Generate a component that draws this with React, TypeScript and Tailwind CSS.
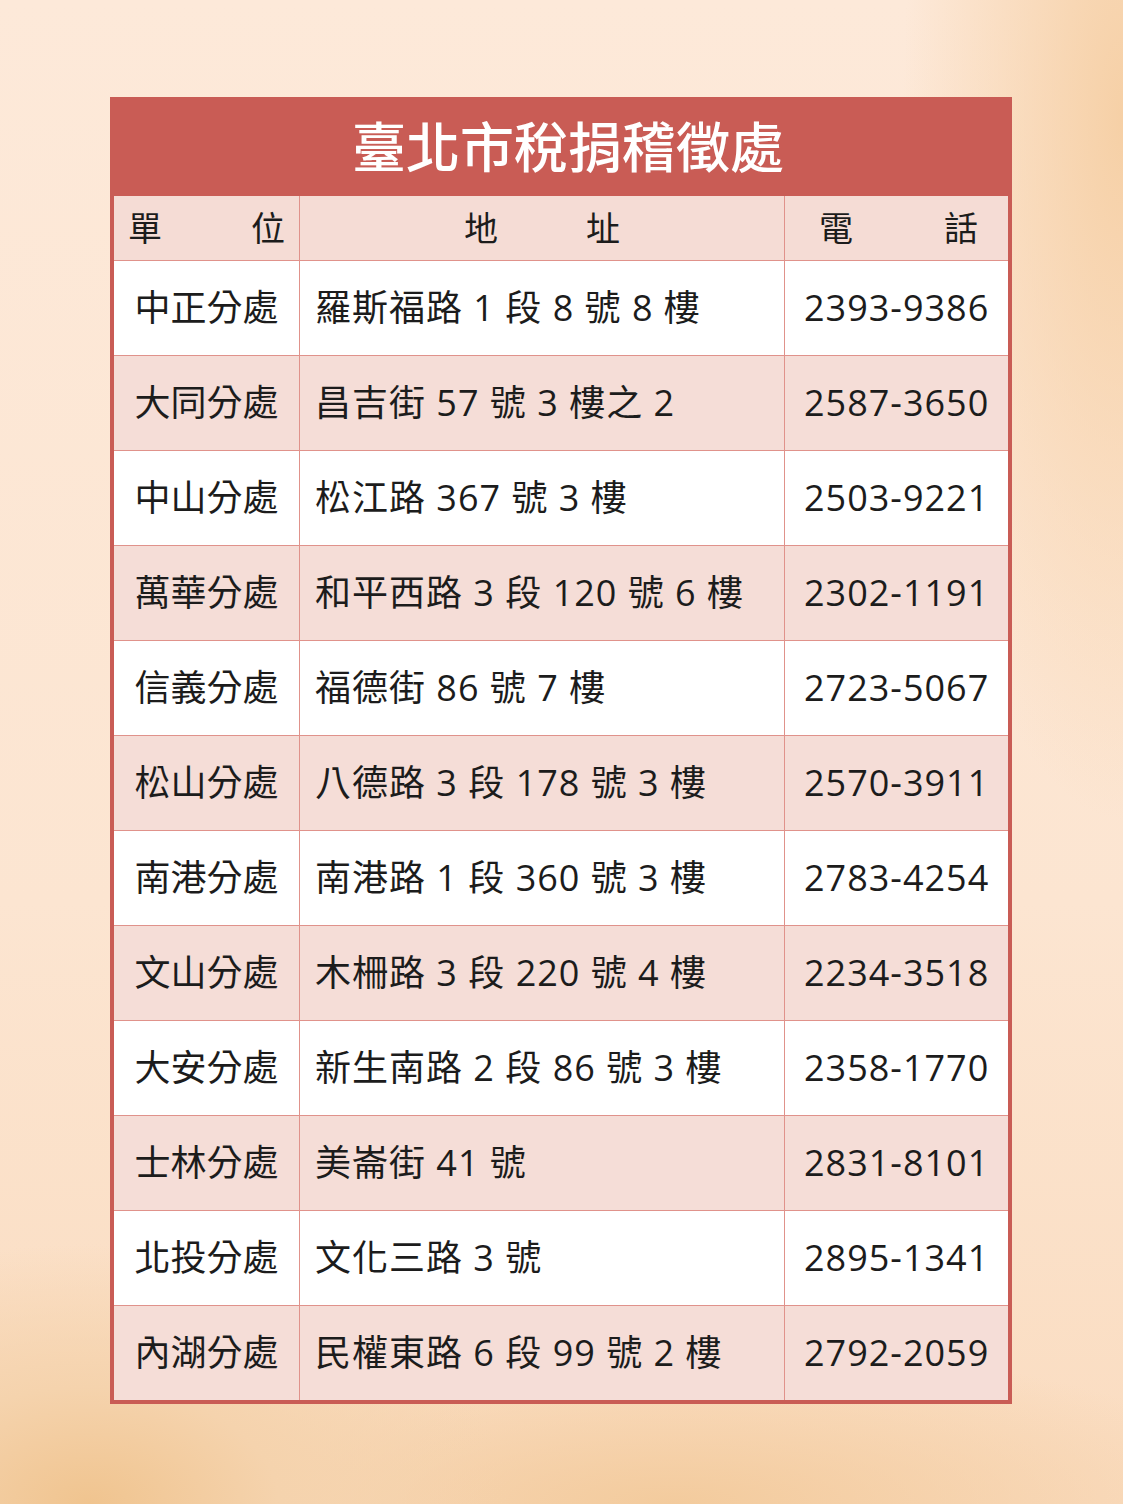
const rows: [string, string, string][] = [
  ["中正分處", "羅斯福路 1 段 8 號 8 樓", "2393-9386"],
  ["大同分處", "昌吉街 57 號 3 樓之 2", "2587-3650"],
  ["中山分處", "松江路 367 號 3 樓", "2503-9221"],
  ["萬華分處", "和平西路 3 段 120 號 6 樓", "2302-1191"],
  ["信義分處", "福德街 86 號 7 樓", "2723-5067"],
  ["松山分處", "八德路 3 段 178 號 3 樓", "2570-3911"],
  ["南港分處", "南港路 1 段 360 號 3 樓", "2783-4254"],
  ["文山分處", "木柵路 3 段 220 號 4 樓", "2234-3518"],
  ["大安分處", "新生南路 2 段 86 號 3 樓", "2358-1770"],
  ["士林分處", "美崙街 41 號", "2831-8101"],
  ["北投分處", "文化三路 3 號", "2895-1341"],
  ["內湖分處", "民權東路 6 段 99 號 2 樓", "2792-2059"],
];

export default function App() {
  return (
    <div
      className="h-[1504px] w-full overflow-hidden pt-[97px] bg-[radial-gradient(ellipse_420px_260px_at_8%_100%,#f0c48f_0%,#f5d3ad_45%,transparent_100%),radial-gradient(ellipse_600px_160px_at_60%_100%,#f3cb9d_0%,transparent_100%),radial-gradient(ellipse_220px_700px_at_100%_8%,#f6d0a6_0%,transparent_100%),linear-gradient(180deg,#fde9d9_0%,#fce5d1_60%,#fadcc0_100%)]"
      style={{ fontFamily: '"Open Sans", "Noto Sans CJK TC", sans-serif' }}
    >
      <div className="ml-[110px] w-[902px] border-x-4 border-b-4 border-[#c95c55] bg-white text-[#1c1c1c]">
        <div
          className="flex h-[99px] items-center justify-center bg-[#c95c55] pb-[3px] pl-[14px] text-[54px] font-medium leading-none text-white"
          style={{ fontFamily: '"Noto Sans CJK TC", sans-serif' }}
        >
          臺北市稅捐稽徵處
        </div>
        <div className="grid h-[64px] grid-cols-[186px_485px_1fr] bg-[#f5dcd5] text-[34px] leading-none">
          <div className="flex items-center justify-between border-r border-[#e0928b] px-[14px]">
            <span>單</span>
            <span>位</span>
          </div>
          <div className="flex items-center justify-center gap-[88px] border-r border-[#e0928b]">
            <span>地</span>
            <span>址</span>
          </div>
          <div className="flex items-center justify-between pl-[34px] pr-[30px]">
            <span>電</span>
            <span>話</span>
          </div>
        </div>
        {rows.map(([unit, addr, tel], i) => (
          <div
            key={unit}
            className={`grid h-[95px] grid-cols-[186px_485px_1fr] border-t border-[#e0928b] text-[36px] leading-none ${
              i % 2 === 1 ? "bg-[#f5ddd7]" : "bg-white"
            }`}
          >
            <div className="flex items-center justify-center border-r border-[#e0928b]">{unit}</div>
            <div className="flex items-center border-r border-[#e0928b] pl-[15px] whitespace-nowrap tracking-[1px]">
              {addr}
            </div>
            <div className="flex items-center pl-[19px] tracking-[1px]">{tel}</div>
          </div>
        ))}
      </div>
    </div>
  );
}
